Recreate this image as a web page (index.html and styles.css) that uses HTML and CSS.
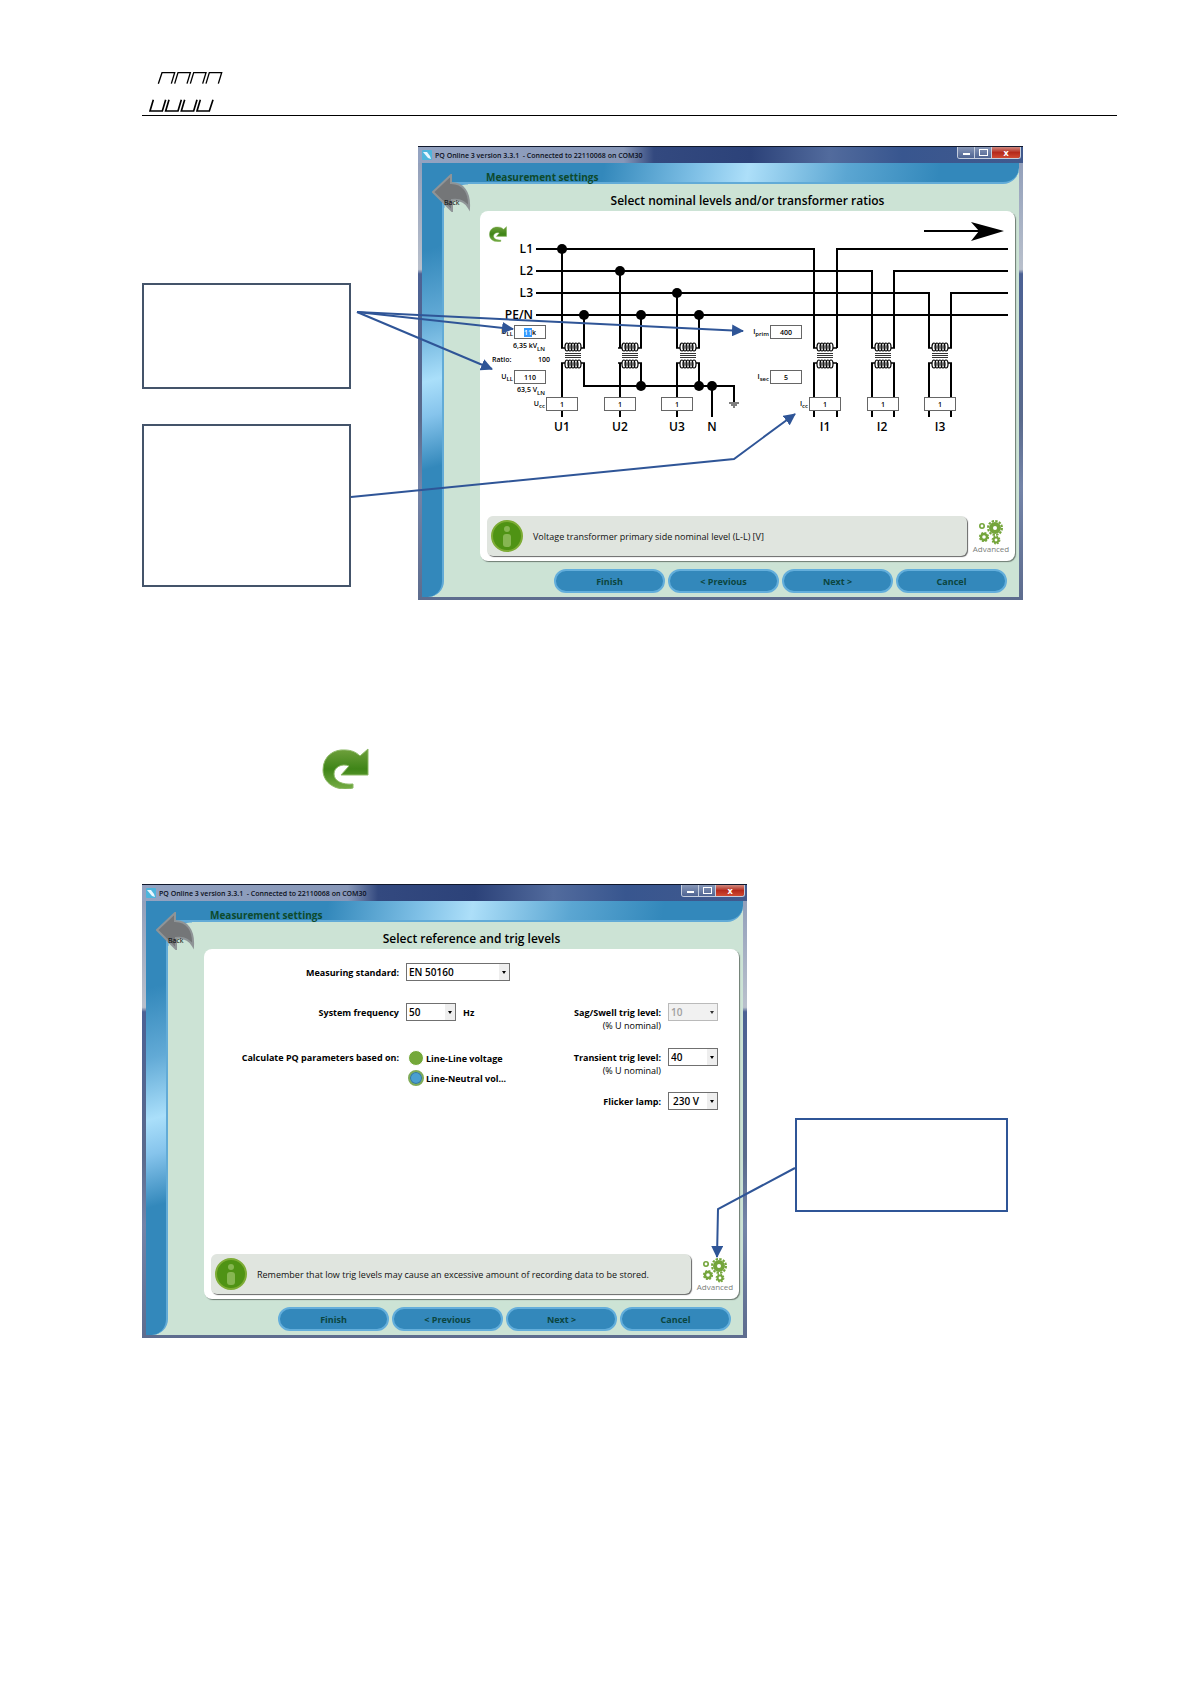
FILE: index.html
```html
<!DOCTYPE html>
<html lang="en">
<head>
  <meta charset="UTF-8">
  <title>PQ Online 3 - Measurement settings</title>
  <link rel="stylesheet" href="styles.css">
</head>
<body>

  <!-- shared symbols -->
  <svg class="defs" width="0" height="0" aria-hidden="true">
    <defs>
      <linearGradient id="greenFill" x1="0" y1="0" x2="0" y2="1">
        <stop offset="0" stop-color="#6fa03c"/>
        <stop offset="0.5" stop-color="#3f8518"/>
        <stop offset="1" stop-color="#76ad45"/>
      </linearGradient>
      <symbol id="redo" viewBox="0 0 47 41">
        <path d="M31 40C14 44 1 35 1 22C1 8 12 1 23 2C29 2 34 4 38 8L46 1V27H19L27 18C20 15 12 19 12 26C12 33 20 37 31 36Z" fill="url(#greenFill)" stroke="#8bb865" stroke-width="1"/>
      </symbol>
      <symbol id="back" viewBox="0 0 39 38">
        <path d="M1 18L19 1V9C31 9 38 18 37 34C33 27 28 25 20 26V37Z" fill="#747678" stroke="#8f9497" stroke-width="2"/>
      </symbol>
      <symbol id="info" viewBox="0 0 32 32">
        <circle cx="16" cy="16" r="15" fill="#4f9314" stroke="#7dac35" stroke-width="2"/>
        <circle cx="16" cy="9" r="3" fill="#86b651"/>
        <rect x="12" y="14" width="8" height="13" rx="3" fill="#86b651"/>
      </symbol>
      <symbol id="gears" viewBox="0 0 26 26">
        <g fill="none" stroke="#74a53b">
          <circle cx="17" cy="9" r="4" stroke-width="4"/>
          <circle cx="17" cy="9" r="7" stroke-width="2" stroke-dasharray="2.4 1.27"/>
          <circle cx="6" cy="18" r="3" stroke-width="2.4"/>
          <circle cx="6" cy="18" r="4.4" stroke-width="1.4" stroke-dasharray="2 1.45"/>
          <circle cx="18" cy="21" r="2.4" stroke-width="2"/>
          <circle cx="18" cy="21" r="3.8" stroke-width="1.2" stroke-dasharray="1.7 1.28"/>
          <circle cx="4" cy="7" r="2.2" stroke-width="1.6"/>
        </g>
      </symbol>
      <symbol id="app" viewBox="0 0 10 10">
        <rect width="10" height="10" rx="1" fill="#4db5dc"/>
        <path d="M1 2L5 2L8 6L9 9L6 8Z" fill="#e8f8ff"/>
      </symbol>
      <symbol id="coil" viewBox="-12 0 24 30">
        <g fill="none" stroke="#000">
          <path d="M-12 8H-8M12 8H8M-12 23H-8M12 23H8" stroke-width="1.6"/>
          <g stroke-width="1.2">
            <ellipse cx="-6" cy="7" rx="2" ry="4"/><ellipse cx="-3" cy="7" rx="2" ry="4"/><ellipse cx="0" cy="7" rx="2" ry="4"/><ellipse cx="3" cy="7" rx="2" ry="4"/><ellipse cx="6" cy="7" rx="2" ry="4"/>
            <ellipse cx="-6" cy="24" rx="2" ry="4"/><ellipse cx="-3" cy="24" rx="2" ry="4"/><ellipse cx="0" cy="24" rx="2" ry="4"/><ellipse cx="3" cy="24" rx="2" ry="4"/><ellipse cx="6" cy="24" rx="2" ry="4"/>
          </g>
          <path d="M-8 13.5H8M-8 15.5H8M-8 17.5H8" stroke-width="0.8"/>
        </g>
      </symbol>
      <marker id="head" viewBox="0 0 12 12" refX="11" refY="6" markerWidth="12" markerHeight="12" markerUnits="userSpaceOnUse" orient="auto">
        <path d="M0 0L12 6L0 12Z" fill="#2f5597"/>
      </marker>
    </defs>
  </svg>

  <header class="page-header">
    <svg class="logo" viewBox="36 0 300 165" aria-hidden="true">
      <g fill="none" stroke="#000" stroke-width="4">
        <path d="M85 71L96 38H134L124 71M134 71L144 38H181L171 71M181 71L191 38H228L218 71M228 71L238 38H275L265 71"/>
        <path d="M70 119L60 153H97L107 119M117 119L107 153H144L154 119M164 119L154 153H191L201 119M211 119L201 153H238L249 119" stroke-width="5"/>
      </g>
    </svg>
  </header>

  <main>
    <section class="figure figure-levels">
      <div class="callouts">
        <div class="callout callout-top"></div>
        <div class="callout callout-bottom"></div>
      </div>

      <div class="window">
        <div class="titlebar">
          <svg class="app-icon"><use href="#app"/></svg>
          <span class="caption">PQ Online 3 version 3.3.1 &nbsp;- Connected to 22110068 on COM30</span>
          <div class="win-buttons">
            <button class="min" aria-label="Minimize"></button>
            <button class="max" aria-label="Maximize"></button>
            <button class="close" aria-label="Close">x</button>
          </div>
        </div>
        <div class="body">
          <div class="rail"></div>
          <div class="band">Measurement settings</div>
          <button class="back"><svg><use href="#back"/></svg><span>Back</span></button>
          <div class="content">
            <h2>Select nominal levels and/or transformer ratios</h2>
            <div class="panel">
              <div class="diagram">
                <svg class="wiring" viewBox="0 0 535 305">
                  <g fill="none" stroke="#000" stroke-width="2">
                    <path d="M56 38H334V137M357 137V38H528"/>
                    <path d="M56 60H392V137M414 137V60H528"/>
                    <path d="M56 82H449V137M471 137V82H528"/>
                    <path d="M56 104H528"/>
                    <path d="M82 38V137M140 60V137M197 82V137M104 104V137M161 104V137M219 104V137"/>
                    <path d="M82 152V206M140 152V206M197 152V206"/>
                    <path d="M104 152V175H254V191M161 152V175M219 152V175M232 175V206"/>
                    <path d="M334 152V206M357 152V206M392 152V206M414 152V206M449 152V206M471 152V206"/>
                    <path d="M444 20H510"/>
                    <path d="M249 192H259M251 194H257M253 196H255" stroke-width="1"/>
                  </g>
                  <path d="M524 20L491 11L499 20L491 30Z"/>
                  <g>
                    <circle cx="82" cy="38" r="5"/><circle cx="140" cy="60" r="5"/><circle cx="197" cy="82" r="5"/>
                    <circle cx="104" cy="104" r="5"/><circle cx="161" cy="104" r="5"/><circle cx="219" cy="104" r="5"/>
                    <circle cx="161" cy="175" r="5"/><circle cx="219" cy="175" r="5"/><circle cx="232" cy="175" r="5"/>
                  </g>
                  <use href="#coil" x="81" y="129" width="24" height="30"/>
                  <use href="#coil" x="138" y="129" width="24" height="30"/>
                  <use href="#coil" x="196" y="129" width="24" height="30"/>
                  <use href="#coil" x="333" y="129" width="24" height="30"/>
                  <use href="#coil" x="391" y="129" width="24" height="30"/>
                  <use href="#coil" x="448" y="129" width="24" height="30"/>
                  <g class="phase end">
                    <text x="53" y="42">L1</text><text x="53" y="64">L2</text><text x="53" y="86">L3</text><text x="53" y="108">PE/N</text>
                  </g>
                  <g class="phase mid">
                    <text x="82" y="220">U1</text><text x="140" y="220">U2</text><text x="197" y="220">U3</text><text x="232" y="220">N</text>
                    <text x="345" y="220">I1</text><text x="402" y="220">I2</text><text x="460" y="220">I3</text>
                  </g>
                  <g class="note">
                    <text x="33" y="137">6,35 kV<tspan class="sub" dy="3">LN</tspan></text>
                    <text x="12" y="151">Ratio:</text>
                    <text x="58" y="151">100</text>
                    <text x="37" y="181">63,5 V<tspan class="sub" dy="3">LN</tspan></text>
                  </g>
                </svg>
                <button class="reset" aria-label="Reset"><svg><use href="#redo"/></svg></button>
                <label class="field u-prim"><span>U<sub>LL</sub></span><input id="uPrim" value="11k"></label>
                <label class="field u-sec"><span>U<sub>LL</sub></span><input value="110"></label>
                <label class="field u-cc1"><span>U<sub>cc</sub></span><input value="1"></label>
                <label class="field u-cc2"><input value="1" aria-label="Ucc 2"></label>
                <label class="field u-cc3"><input value="1" aria-label="Ucc 3"></label>
                <label class="field i-prim"><span>I<sub>prim</sub></span><input value="400"></label>
                <label class="field i-sec"><span>I<sub>sec</sub></span><input value="5"></label>
                <label class="field i-cc1"><span>I<sub>cc</sub></span><input value="1"></label>
                <label class="field i-cc2"><input value="1" aria-label="Icc 2"></label>
                <label class="field i-cc3"><input value="1" aria-label="Icc 3"></label>
              </div>
              <div class="footer">
                <div class="info"><svg><use href="#info"/></svg><p>Voltage transformer primary side nominal level (L-L) [V]</p></div>
                <button class="advanced"><svg><use href="#gears"/></svg>Advanced</button>
              </div>
            </div>
            <nav class="steps">
              <button>Finish</button>
              <button>&lt; Previous</button>
              <button>Next &gt;</button>
              <button>Cancel</button>
            </nav>
          </div>
        </div>
      </div>

      <svg class="arrows" viewBox="0 0 881 454" aria-hidden="true">
        <path d="M215 166L371 183"/>
        <path d="M215 166L350 223"/>
        <path d="M215 166L601 185"/>
        <path d="M209 351L592 313L653 268"/>
      </svg>
    </section>

    <svg class="redo-large" role="img" aria-label="Reset icon"><use href="#redo"/></svg>

    <section class="figure figure-trig">
      <div class="window">
        <div class="titlebar">
          <svg class="app-icon"><use href="#app"/></svg>
          <span class="caption">PQ Online 3 version 3.3.1 &nbsp;- Connected to 22110068 on COM30</span>
          <div class="win-buttons">
            <button class="min" aria-label="Minimize"></button>
            <button class="max" aria-label="Maximize"></button>
            <button class="close" aria-label="Close">x</button>
          </div>
        </div>
        <div class="body">
          <div class="rail"></div>
          <div class="band">Measurement settings</div>
          <button class="back"><svg><use href="#back"/></svg><span>Back</span></button>
          <div class="content">
            <h2>Select reference and trig levels</h2>
            <div class="panel">
              <form class="trig-form">
                <label class="name" for="standard">Measuring standard:</label>
                <select class="wide" id="standard"><option>EN 50160</option></select>

                <label class="name row2" for="freq">System frequency</label>
                <div class="unit"><select id="freq"><option>50</option></select><span>Hz</span></div>
                <label class="name" for="sag">Sag/Swell trig level:<small>(% U nominal)</small></label>
                <select id="sag" disabled><option>10</option></select>

                <span class="name row3">Calculate PQ parameters based on:</span>
                <div class="radios">
                  <label><input type="radio" name="basis">Line-Line voltage</label>
                  <label><input type="radio" name="basis" checked>Line-Neutral vol...</label>
                </div>
                <label class="name" for="transient">Transient trig level:<small>(% U nominal)</small></label>
                <select id="transient"><option>40</option></select>

                <label class="name lamp" for="lamp">Flicker lamp:</label>
                <select class="indent" id="lamp"><option>230 V</option></select>
              </form>
              <div class="footer">
                <div class="info"><svg><use href="#info"/></svg><p>Remember that low trig levels may cause an excessive amount of recording data to be stored.</p></div>
                <button class="advanced"><svg><use href="#gears"/></svg>Advanced</button>
              </div>
            </div>
            <nav class="steps">
              <button>Finish</button>
              <button>&lt; Previous</button>
              <button>Next &gt;</button>
              <button>Cancel</button>
            </nav>
          </div>
        </div>
      </div>
      <div class="callout callout-side"></div>

      <svg class="arrows" viewBox="0 0 866 454" aria-hidden="true">
        <path d="M653 284L576 325L575 373"/>
      </svg>
    </section>
  </main>

  <script>
    const uPrim = document.getElementById('uPrim');
    uPrim.focus({ preventScroll: true });
    uPrim.setSelectionRange(0, 2);
  </script>

</body>
</html>
```
FILE: styles.css
```css
* {
  box-sizing: border-box;
}

body {
  margin: 0;
  padding: 60px 74px 344px 142px;
  background: #fff;
  color: #000;
  font-family: "Open Sans", "Noto Sans", sans-serif;
  font-size: 9px;
}

button, input, select {
  font: inherit;
  color: inherit;
  margin: 0;
  padding: 0;
}

button {
  border: none;
  background: none;
  cursor: pointer;
}

.defs {
  position: absolute;
}

.page-header {
  border-bottom: 1px solid #000;
  margin-bottom: 30px;
}

.logo {
  display: block;
  width: 100px;
  height: 55px;
}

/* figures */
.figure {
  position: relative;
  display: grid;
}

.figure-levels {
  max-width: 881px;
  grid-template-columns: 209px 1fr;
  gap: 67px;
}

.figure-trig {
  max-width: 866px;
  grid-template-columns: 1fr 213px;
  gap: 48px;
}

.callouts {
  display: flex;
  flex-direction: column;
  gap: 35px;
  padding-top: 137px;
}

.callout {
  border: 2px solid #44546a;
}

.callout-top {
  height: 106px;
}

.callout-bottom {
  height: 163px;
}

.callout-side {
  height: 94px;
  margin-top: 234px;
  border-color: #2f5597;
}

.arrows {
  position: absolute;
  left: 0;
  top: 0;
  width: 100%;
  pointer-events: none;
}

.arrows path {
  fill: none;
  stroke: #2f5597;
  stroke-width: 2;
  marker-end: url(#head);
}

.redo-large {
  display: block;
  width: 47px;
  height: 41px;
  margin: 148px 0 95px 180px;
}

/* application window */
.window {
  padding: 0 4px 3px;
  border-top: 1px solid #10182c;
  background: linear-gradient(#8d9bb8, #b9c0cc 27%, #4c6194 28%, #5a6a8c 60%, #7484a8 75%, #5d6c8e);
}

.titlebar {
  display: flex;
  align-items: center;
  height: 16px;
  margin: 0 -4px;
  padding: 0 2px 0 4px;
  background: linear-gradient(90deg, #94a3c1, #8797b8 34%, #33497f 39%, #2c4279 55%, #526b9d 68%, #38568f 80%, #41598d);
}

.app-icon {
  width: 10px;
  height: 10px;
  margin-right: 3px;
}

.caption {
  flex: 1;
  font-size: 7px;
  font-weight: 600;
  color: #0b1020;
}

.win-buttons {
  display: flex;
  align-self: flex-start;
  height: 12px;
  border: 1px solid #c5cede;
  border-top: none;
  border-radius: 0 0 3px 3px;
  overflow: hidden;
}

.win-buttons button {
  display: flex;
  align-items: center;
  justify-content: center;
  width: 17px;
  border-right: 1px solid #c5cede;
  background: linear-gradient(#8797b8, #4f6492);
  color: #fff;
  font-size: 9px;
  font-weight: 700;
  line-height: 8px;
}

.win-buttons .min::before {
  content: "";
  width: 7px;
  height: 2px;
  margin-top: 3px;
  background: #fff;
}

.win-buttons .max::before {
  content: "";
  width: 7px;
  height: 5px;
  border: 1px solid #fff;
}

.win-buttons .close {
  width: 28px;
  border-right: none;
  background: linear-gradient(#d08a80, #b52a1c 50%, #d04a32);
}

.body {
  position: relative;
  display: grid;
  grid-template-columns: 22px 1fr;
  grid-template-rows: 21px auto;
  background: #cce3d5;
}

.rail {
  grid-row: 1 / 3;
  border-right: 2px solid #62abd7;
  border-radius: 0 0 16px 0;
  background: linear-gradient(165deg, #3388bb 20%, #62aad6 36%, #aadffa 50%, #86c4ec 58%, #3388bb 70%);
}

.band {
  padding-left: 44px;
  margin-left: -2px;
  border-bottom: 2px solid #62abd7;
  border-radius: 0 0 16px 0;
  background: linear-gradient(100deg, #3388bb 28%, #7fc0e6 44%, #addff9 53%, #5ba6d2 70%, #3388bb 86%);
  color: #0d4a2c;
  font-size: 10px;
  font-weight: 700;
  line-height: 28px;
}

.back {
  position: absolute;
  left: 10px;
  top: 11px;
  width: 39px;
  height: 38px;
}

.back svg {
  display: block;
  width: 39px;
  height: 38px;
}

.back span {
  position: absolute;
  left: 12px;
  top: 24px;
  font-size: 7px;
  line-height: 10px;
}

.content {
  background: radial-gradient(circle at 24px 24px, #cce3d5 23px, #62abd7 24px, #3388bb 26px) 0 0 / 24px 24px no-repeat;
}

h2 {
  margin: 0;
  padding: 6px 4px 0 36px;
  font-size: 12px;
  font-weight: 600;
  line-height: 21px;
  text-align: center;
}

.panel {
  display: flex;
  flex-direction: column;
  justify-content: space-between;
  min-height: 350px;
  margin: 0 4px 0 36px;
  border-radius: 8px;
  background: #fff;
  box-shadow: 1px 1px 1px #6d7a72;
}

.footer {
  display: flex;
  align-items: center;
  padding: 0 0 5px 7px;
}

.info {
  flex: 1;
  display: flex;
  align-items: center;
  gap: 10px;
  height: 40px;
  padding-left: 4px;
  border-radius: 6px;
  background: #e0e5df;
  box-shadow: 1px 1px 1px #666;
}

.info svg {
  width: 32px;
  height: 32px;
  flex-shrink: 0;
}

.info p {
  margin: 0;
  color: #111;
}

.advanced {
  width: 48px;
  color: #7b807b;
  font-size: 8px;
  line-height: 8px;
}

.advanced svg {
  display: block;
  width: 26px;
  height: 26px;
  margin: 0 auto;
}

.steps {
  display: flex;
  justify-content: flex-end;
  gap: 3px;
  padding: 8px 12px 4px 60px;
}

.steps button {
  width: 111px;
  height: 24px;
  border: 2px solid #63aedb;
  border-radius: 12px;
  background: #3388bb;
  color: #0b4540;
  font-weight: 700;
}

/* wiring diagram */
.diagram {
  position: relative;
  width: 535px;
}

.wiring {
  display: block;
  width: 535px;
  height: 305px;
}

.phase {
  font-size: 12px;
  font-weight: 600;
}

.end {
  text-anchor: end;
}

.mid {
  text-anchor: middle;
}

.note {
  font-size: 7px;
  font-weight: 600;
}

.sub {
  font-size: 6px;
}

.reset {
  position: absolute;
  left: 9px;
  top: 15px;
}

.reset svg {
  display: block;
  width: 18px;
  height: 16px;
}

.field {
  position: absolute;
  display: flex;
  justify-content: flex-end;
  align-items: center;
  gap: 1px;
  width: 60px;
  font-size: 7px;
  font-weight: 600;
  line-height: 12px;
}

.field sub {
  font-size: 6px;
  line-height: 0;
}

.field input {
  width: 32px;
  height: 14px;
  border: 1px solid #666;
  border-radius: 0;
  background: #fff;
  outline: none;
  text-align: center;
}

.field input::selection {
  background: #3399ff;
  color: #fff;
}

.u-prim { left: 6px; top: 114px; }
.u-sec { left: 6px; top: 159px; }
.u-cc1 { left: 38px; top: 186px; }
.u-cc2 { left: 96px; top: 186px; }
.u-cc3 { left: 153px; top: 186px; }
.i-prim { left: 262px; top: 114px; }
.i-sec { left: 262px; top: 159px; }
.i-cc1 { left: 301px; top: 186px; }
.i-cc2 { left: 359px; top: 186px; }
.i-cc3 { left: 416px; top: 186px; }

/* trig levels form */
.trig-form {
  display: grid;
  grid-template-columns: 195px 104px 1fr 50px;
  grid-template-rows: 40px 45px 44px 20px;
  column-gap: 7px;
  align-items: start;
  padding: 14px 21px 0 0;
  font-weight: 700;
}

.name {
  line-height: 20px;
  text-align: right;
}

.name small {
  display: block;
  margin-top: -2px;
  font-size: 9px;
  font-weight: 400;
  line-height: 10px;
}

.row2, .row3 {
  grid-column: 1;
}

.lamp {
  grid-column: 3;
}

.trig-form select {
  width: 50px;
  height: 18px;
  padding-left: 2px;
  appearance: none;
  border: 1px solid #707070;
  border-radius: 0;
  background: #fff url("data:image/svg+xml,%3Csvg xmlns='http://www.w3.org/2000/svg' width='10' height='16'%3E%3Crect width='10' height='16' fill='%23eee'/%3E%3Cpath d='M3 7h4l-2 3z'/%3E%3C/svg%3E") right center no-repeat;
  font-size: 10px;
  font-weight: 600;
}

.trig-form .wide {
  width: 104px;
}

.trig-form .indent {
  padding-left: 4px;
}

.trig-form select:disabled {
  border-color: #aaa;
  background-color: #eee;
  color: #888;
  opacity: 0.8;
}

.unit {
  display: flex;
  align-items: center;
  gap: 7px;
}

.radios {
  display: flex;
  flex-direction: column;
  gap: 4px;
  padding: 2px 0 0 2px;
}

.radios label {
  display: flex;
  align-items: center;
  gap: 2px;
  height: 16px;
  white-space: nowrap;
}

.radios input {
  flex-shrink: 0;
  width: 16px;
  height: 16px;
  appearance: none;
  border: 1px solid #fff;
  border-radius: 50%;
  background: #74a83a;
}

.radios input:checked {
  border: 2px solid #7fab58;
  background: #4a9fd0;
  box-shadow: inset 0 0 0 1px #3576a0;
}
```
